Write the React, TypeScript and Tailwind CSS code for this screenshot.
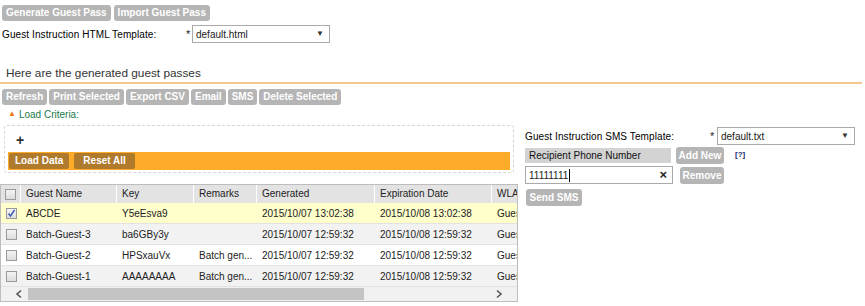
import React from "react";

const F = { fontFamily: '"Liberation Sans", Arial, sans-serif' };

function GBtn({ children }: { children: React.ReactNode }) {
  return (
    <div className="h-[16px] px-[4px] rounded-[3px] bg-[#b5b5b5] text-white font-bold text-[10px] leading-[16px] whitespace-nowrap">
      {children}
    </div>
  );
}

function Cb({ checked }: { checked?: boolean }) {
  return (
    <div className="w-[11px] h-[11px] border border-[#9a9a9a] bg-gradient-to-b from-[#f4f4f4] to-[#dcdcdc] flex items-center justify-center">
      {checked && (
        <svg width="9" height="9" viewBox="0 0 9 9">
          <path d="M1.5 4.5 L3.5 7 L7.5 1" stroke="#3b5bb0" strokeWidth="1.4" fill="none" />
        </svg>
      )}
    </div>
  );
}

const cols = [20, 96, 77, 63, 118, 117, 28];

function Row({ cells, bg, checked }: { cells: string[]; bg: string; checked?: boolean }) {
  return (
    <div className={`flex h-[21px] items-center border-b border-[#e2e2e2] ${bg}`}>
      <div className="w-[20px] flex justify-center shrink-0">
        <Cb checked={checked} />
      </div>
      {cells.map((c, i) => (
        <div
          key={i}
          style={{ width: cols[i + 1] }}
          className="shrink-0 pl-[5px] text-[10px] text-[#222] whitespace-nowrap overflow-hidden"
        >
          {c}
        </div>
      ))}
    </div>
  );
}

export default function App() {
  return (
    <div className="w-[865px] h-[306px] bg-white overflow-hidden text-[#222]" style={F}>
      <div className="flex gap-[3px] pl-[2px] pt-[5px]">
        <GBtn>Generate Guest Pass</GBtn>
        <GBtn>Import Guest Pass</GBtn>
      </div>
      <div className="flex items-center pl-[2px] mt-[4px] h-[18px]">
        <div className="w-[184px] text-[10px] text-[#000] tracking-[0.1px]">Guest Instruction HTML Template:</div>
        <div className="w-[6px] text-[11px]">*</div>
        <div className="w-[138px] h-[18px] border border-[#aaa] flex items-center justify-between pl-[3px] pr-[5px] text-[10px]">
          <span>default.html</span>
          <span className="text-[8px] text-[#333]">▼</span>
        </div>
      </div>
      <div className="mt-[22px] w-[862px] border-b-2 border-[#f6c890] pl-[6px] pb-[1px] text-[11.8px] text-[#333] leading-[16px]">
        Here are the generated guest passes
      </div>
      <div className="flex gap-[2px] pl-[2px] mt-[5px]">
        <GBtn>Refresh</GBtn>
        <GBtn>Print Selected</GBtn>
        <GBtn>Export CSV</GBtn>
        <GBtn>Email</GBtn>
        <GBtn>SMS</GBtn>
        <GBtn>Delete Selected</GBtn>
      </div>
      <div className="flex">
        <div className="w-[519px] shrink-0">
          <div className="flex items-center pl-[8px] mt-[2px] h-[14px] text-[10px]">
            <span className="text-[8px] text-[#f07a1a] mr-[3px]">▲</span>
            <span className="text-[#217a4a]">Load Criteria:</span>
          </div>
          <div className="ml-[4px] mt-[4px] w-[510px] h-[48px] border border-dashed border-[#d6d6d6] rounded-[3px] pt-[6px] px-[3px]">
            <div className="pl-[8px] h-[20px] text-[14px] font-bold text-[#333] leading-[16px]">+</div>
            <div className="h-[18px] bg-[#fdab28] flex items-center gap-[5px] pl-[1px]">
              <div className="h-[16px] px-[6px] rounded-[2px] bg-[#b07a2c] text-white text-[10px] font-bold leading-[16px] whitespace-nowrap">Load Data</div>
              <div className="h-[16px] px-[9px] rounded-[2px] bg-[#b07a2c] text-white text-[10px] font-bold leading-[16px] whitespace-nowrap">Reset All</div>
            </div>
          </div>
          <div className="mt-[11px] w-[518px] border border-[#bdbdbd] overflow-hidden">
            <div className="flex h-[18px] items-center bg-[#e3e3e3]">
              <div className="w-[20px] flex justify-center shrink-0 border-r border-white h-full items-center">
                <Cb />
              </div>
              {["Guest Name", "Key", "Remarks", "Generated", "Expiration Date", "WLAN"].map((h, i) => (
                <div
                  key={h}
                  style={{ width: cols[i + 1] }}
                  className="shrink-0 pl-[5px] text-[10px] text-[#222] whitespace-nowrap overflow-hidden border-r border-white h-full leading-[18px]"
                >
                  {h}
                </div>
              ))}
            </div>
            <Row checked bg="bg-[#ffffcc]" cells={["ABCDE", "Y5eEsva9", "", "2015/10/07 13:02:38", "2015/10/08 13:02:38", "Guest"]} />
            <Row bg="bg-[#f2f2f2]" cells={["Batch-Guest-3", "ba6GBy3y", "", "2015/10/07 12:59:32", "2015/10/08 12:59:32", "Guest"]} />
            <Row bg="bg-white" cells={["Batch-Guest-2", "HPSxauVx", "Batch gen...", "2015/10/07 12:59:32", "2015/10/08 12:59:32", "Guest"]} />
            <Row bg="bg-[#f2f2f2]" cells={["Batch-Guest-1", "AAAAAAAA", "Batch gen...", "2015/10/07 12:59:32", "2015/10/08 12:59:32", "Guest"]} />
            <div className="h-[14px] bg-[#f1f1f1] flex items-center">
              <svg width="27" height="14" viewBox="0 0 27 14" className="shrink-0">
                <path d="M20 3.5 L16 7 L20 10.5" stroke="#555" strokeWidth="1.6" fill="none" />
              </svg>
              <div className="w-[336px] h-[12px] bg-[#c4c4c4] shrink-0" />
              <div className="flex-1" />
              <svg width="27" height="14" viewBox="0 0 27 14" className="shrink-0">
                <path d="M7 3.5 L11 7 L7 10.5" stroke="#555" strokeWidth="1.6" fill="none" />
              </svg>
            </div>
          </div>
        </div>
        <div className="ml-[6px] pt-[22px]">
          <div className="flex items-center h-[18px]">
            <div className="w-[185px] text-[10px] text-[#000] tracking-[0.1px]">Guest Instruction SMS Template:</div>
            <div className="w-[7px] text-[11px]">*</div>
            <div className="w-[138px] h-[18px] border border-[#aaa] flex items-center justify-between pl-[3px] pr-[5px] text-[10px]">
              <span>default.txt</span>
              <span className="text-[8px] text-[#333]">▼</span>
            </div>
          </div>
          <div className="flex items-center mt-[1px] h-[18px]">
            <div className="w-[146px] h-[15px] bg-[#d3d3d3] pl-[4px] text-[10px] text-[#111] leading-[15px]">Recipient Phone Number</div>
            <div className="ml-[5px] h-[17px] w-[48px] rounded-[3px] bg-[#b5b5b5] text-white font-bold text-[10px] leading-[17px] text-center whitespace-nowrap">Add New</div>
            <div className="ml-[11px] text-[8px] font-bold text-[#1a2a6a]">[?]</div>
          </div>
          <div className="flex items-center mt-[2px]">
            <div className="w-[148px] h-[18px] border border-[#aaa] flex items-center justify-between pl-[3px] pr-[5px] text-[10px]">
              <span className="flex items-center">
                11111111<span className="inline-block w-[1px] h-[13px] bg-black ml-[1px]" />
              </span>
              <span className="text-[13px] font-bold">×</span>
            </div>
            <div className="ml-[7px] h-[17px] w-[44px] rounded-[3px] bg-[#b5b5b5] text-white font-bold text-[10px] leading-[17px] text-center">Remove</div>
          </div>
          <div className="mt-[5px] ml-[1px] h-[17px] w-[56px] rounded-[3px] bg-[#b5b5b5] text-white font-bold text-[10px] leading-[17px] text-center">Send SMS</div>
        </div>
      </div>
    </div>
  );
}
